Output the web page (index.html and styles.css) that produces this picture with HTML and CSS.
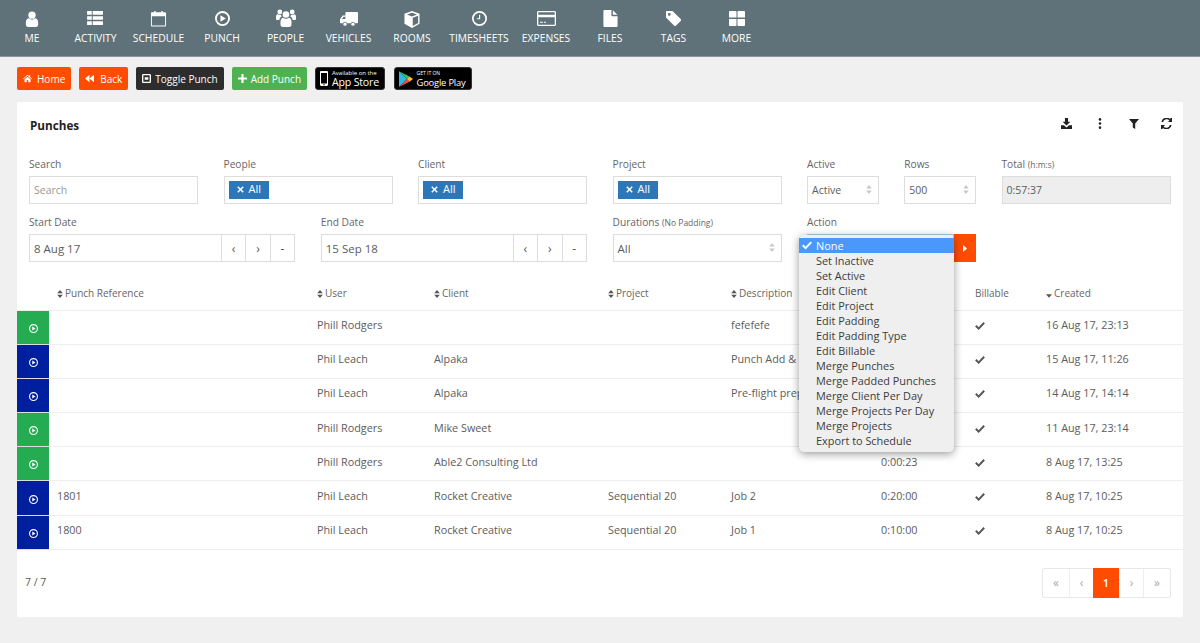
FILE: index.html
```html
<!DOCTYPE html>
<html lang="en">
<head>
<meta charset="utf-8">
<title>Punches</title>
<link rel="stylesheet" href="styles.css">
</head>
<body>
<svg class="sprite" aria-hidden="true">
  <symbol id="i-user" viewBox="0 0 16 18"><circle cx="8" cy="4.6" r="4.2"/><path d="M1 15.5v-2.7c0-2.6 1.5-4.6 3.6-4.6.9.9 2.1 1.4 3.4 1.4s2.500-.5 3.400-1.400c2.100 0 3.600 2 3.600 4.600v2.700c0 1.400-1 2.500-2.400 2.500H3.400C2 18 1 16.900 1 15.500z"/></symbol>
  <symbol id="i-list" viewBox="0 0 18 15"><path d="M0 0h5v4H0zM6 0h11v4H6zM0 5.500h5v4H0zM6 5.500h11v4H6zM0 11h5v4H0zM6 11h11v4H6z"/></symbol>
  <symbol id="i-cal" viewBox="0 0 17 18"><path d="M1.500 2.500H4V1h1.500v1.500h6V1H13v1.500h2.500c.6 0 1 .4 1 1v13c0 .6-.4 1-1 1h-14c-.6 0-1-.4-1-1v-13c0-.6.4-1 1-1zm0 4v10h14v-10z"/></symbol>
  <symbol id="i-play" viewBox="0 0 16 16"><path fill-rule="evenodd" d="M8 0a8 8 0 1 1 0 16A8 8 0 0 1 8 0zm0 2a6 6 0 1 0 0 12A6 6 0 0 0 8 2zM5.800 4.500l5.700 3.500-5.700 3.500z"/></symbol>
  <symbol id="i-users" viewBox="0 0 20 18"><circle cx="10" cy="5.500" r="3.300"/><circle cx="3.800" cy="3" r="2.400"/><circle cx="16.200" cy="3" r="2.400"/><path d="M5 10.500c.5-1 1.200-1.600 2-1.700.8.700 1.800 1 3 1s2.200-.3 3-1c.8.100 1.500.7 2 1.700.6 1.300.5 3.200.5 5 0 1.500-1 2.500-2.200 2.500H6.700C5.500 18 4.500 17 4.500 15.500c0-1.800-.1-3.700.5-5z"/><path d="M0 7.500C0 6.300.6 5.500 1.700 5.200c.6.500 1.300.8 2.100.8.500 0 1-.1 1.400-.3-.1.600.1 1.300.5 1.900-1.300.5-2.200 1.700-2.300 3.500H1.200C.5 11.100 0 10.500 0 9.700zM20 7.500c0-1.200-.6-2-1.700-2.300-.6.500-1.300.8-2.100.8-.500 0-1-.1-1.400-.3.100.6-.1 1.300-.5 1.900 1.300.5 2.200 1.700 2.300 3.500h2.200c.7 0 1.200-.6 1.200-1.400z"/></symbol>
  <symbol id="i-truck" viewBox="0 0 20 16"><path d="M7 0h12c.6 0 1 .4 1 1v10.500c0 .6-.4 1-1 1h-2.300a2.400 2.400 0 0 0-4.600 0H7.900a2.400 2.400 0 0 0-4.600 0H1c-.6 0-1-.4-1-1V8l3-4h3V1c0-.6.4-1 1-1zM2.200 7.800H6V5.200H4z"/><circle cx="5.600" cy="13.500" r="1.800"/><circle cx="14.400" cy="13.500" r="1.800"/></symbol>
  <symbol id="i-cube" viewBox="0 0 17 18"><path fill-rule="evenodd" d="M8.500 0l8 3v10.500l-8 4.500-8-4.500V3zm0 1.700L3.200 3.700l5.300 2.100 5.300-2.100zM9.300 7.100v8.900l5.700-3.200V4.900z"/></symbol>
  <symbol id="i-clock" viewBox="0 0 16 16"><path fill-rule="evenodd" d="M8 0a8 8 0 1 1 0 16A8 8 0 0 1 8 0zm0 1.800a6.200 6.200 0 1 0 0 12.400A6.200 6.200 0 0 0 8 1.800zM8.700 4v4.800H5.200V7.600h2.300V4z"/></symbol>
  <symbol id="i-card" viewBox="0 0 19 15"><path fill-rule="evenodd" d="M1.500 0h16c.8 0 1.500.7 1.500 1.500v12c0 .8-.7 1.500-1.500 1.500h-16C.7 15 0 14.300 0 13.500v-12C0 .7.700 0 1.500 0zM1.300 1.300v2.400h16.400V1.300zm0 5v7.400h16.400V6.300zM3 10.800h3v1H3zm4 0h2v1H7z"/></symbol>
  <symbol id="i-file" viewBox="0 0 15 18"><path d="M1 0h7.500v5.500c0 .6.400 1 1 1H15V17c0 .6-.4 1-1 1H1c-.6 0-1-.4-1-1V1c0-.6.400-1 1-1zM10 .2l4.800 4.900H10z"/></symbol>
  <symbol id="i-tag" viewBox="0 0 15 15"><path fill-rule="evenodd" d="M1 0h5.500L14.600 8c.6.600.6 1.500 0 2.100l-4.500 4.500c-.6.600-1.500.6-2.100 0L0 6.500V1c0-.6.400-1 1-1zm2.300 2A1.400 1.400 0 1 0 3.300 4.800 1.400 1.400 0 0 0 3.300 2z"/></symbol>
  <symbol id="i-grid" viewBox="0 0 16 15"><path d="M1 0h5.500c.6 0 1 .4 1 1v5.500H0V1c0-.6.400-1 1-1zM9.500 0H15c.6 0 1 .4 1 1v5.500H8.500V1c0-.6.400-1 1-1zM0 8h7.500v6c0 .6-.4 1-1 1H1c-.6 0-1-.4-1-1zM8.500 8H16v6c0 .6-.4 1-1 1H9.500c-.6 0-1-.4-1-1z"/></symbol>
  <symbol id="i-home" viewBox="0 0 12 10"><path d="M6 0l2 1.700V.6h1.500v2.400L12 5.200l-.6.700L6 1.400.6 5.900 0 5.200zM2 6l4-3.400L10 6v4H7V7H5v3H2z"/></symbol>
  <symbol id="i-back" viewBox="0 0 12 10"><path d="M6 0v10L0 5zM12 0v10L6 5z"/></symbol>
  <symbol id="i-toggle" viewBox="0 0 10 10"><path fill-rule="evenodd" d="M1.500 0h7C9.300 0 10 .7 10 1.500v7c0 .8-.7 1.500-1.500 1.500h-7C.7 10 0 9.300 0 8.500v-7C0 .7.700 0 1.500 0zm0 1.300v7.400h7V1.300zM3 3.500h4v3H3z"/></symbol>
  <symbol id="i-plus" viewBox="0 0 10 10"><path d="M3.800 0h2.400v3.800H10v2.400H6.200V10H3.800V6.200H0V3.800h3.800z"/></symbol>
  <symbol id="i-times" viewBox="0 0 8 8"><path d="M1.500.3L4 2.800 6.500.3l1.200 1.200L5.200 4l2.500 2.500-1.200 1.200L4 5.200 1.500 7.700.3 6.500 2.800 4 .3 1.500z"/></symbol>
  <symbol id="i-download" viewBox="0 0 12 12"><path d="M4.300 0h3.400v4h2.500L6 8.300 1.800 4h2.500zM0 8h3.200L6 10.300 8.800 8H12v4H0z"/></symbol>
  <symbol id="i-dots" viewBox="0 0 4 12"><circle cx="2" cy="1.500" r="1.400"/><circle cx="2" cy="6" r="1.400"/><circle cx="2" cy="10.500" r="1.400"/></symbol>
  <symbol id="i-filter" viewBox="0 0 10 10"><path d="M0 0h10L6.200 4.500V10L3.800 8.500v-4z"/></symbol>
  <symbol id="i-refresh" viewBox="0 0 11 11"><path d="M9.600 0L11 0v4H7l1.400-1.400A3.600 3.600 0 0 0 2.100 4H.4a5.200 5.200 0 0 1 8.600-3.100zM1.400 11H0V7h4L2.600 8.400A3.600 3.600 0 0 0 8.900 7h1.700A5.200 5.200 0 0 1 2 10.100z"/></symbol>
  <symbol id="i-sort" viewBox="0 0 7 10"><path d="M3.500 0L7 4H0zM0 6h7l-3.500 4z"/></symbol>
  <symbol id="i-desc" viewBox="0 0 7 4"><path d="M0 0h7L3.500 4z"/></symbol>
  <symbol id="i-check" viewBox="0 0 11 9"><path d="M4 9L0 5l1.600-1.600L4 5.800 9.400 0 11 1.600z"/></symbol>
  <symbol id="i-spin" viewBox="0 0 6 10"><path d="M3 0l3 4H0zM0 6h6l-3 4z"/></symbol>
  <symbol id="i-caret" viewBox="0 0 4 7"><path d="M0 0l4 3.500L0 7z"/></symbol>
  <symbol id="i-phone" viewBox="0 0 8 15"><path fill-rule="evenodd" d="M1.200 0h5.600C7.500 0 8 .5 8 1.200v12.600c0 .7-.5 1.200-1.200 1.200H1.200C.5 15 0 14.500 0 13.800V1.200C0 .5.500 0 1.200 0zM1 2v10.500h6V2zm3 11a.7.7 0 1 0 0 1.400A.7.7 0 0 0 4 13z"/></symbol>
</svg>

<nav class="nav">
  <a class="nav-item w-me"><svg class="ni ni-user"><use href="#i-user"/></svg><span>ME</span></a>
  <a class="nav-item w63"><svg class="ni ni-list"><use href="#i-list"/></svg><span>ACTIVITY</span></a>
  <a class="nav-item w63"><svg class="ni ni-cal"><use href="#i-cal"/></svg><span>SCHEDULE</span></a>
  <a class="nav-item w64"><svg class="ni ni-play"><use href="#i-play"/></svg><span>PUNCH</span></a>
  <a class="nav-item w63"><svg class="ni ni-users"><use href="#i-users"/></svg><span>PEOPLE</span></a>
  <a class="nav-item w63"><svg class="ni ni-truck"><use href="#i-truck"/></svg><span>VEHICLES</span></a>
  <a class="nav-item w64"><svg class="ni ni-cube"><use href="#i-cube"/></svg><span>ROOMS</span></a>
  <a class="nav-item w70"><svg class="ni ni-play"><use href="#i-clock"/></svg><span>TIMESHEETS</span></a>
  <a class="nav-item w64"><svg class="ni ni-card"><use href="#i-card"/></svg><span>EXPENSES</span></a>
  <a class="nav-item w64"><svg class="ni ni-file"><use href="#i-file"/></svg><span>FILES</span></a>
  <a class="nav-item w63"><svg class="ni ni-tag"><use href="#i-tag"/></svg><span>TAGS</span></a>
  <a class="nav-item w63"><svg class="ni ni-grid"><use href="#i-grid"/></svg><span>MORE</span></a>
</nav>

<div class="toolbar">
  <a class="btn orange"><svg class="bi"><use href="#i-home"/></svg>Home</a>
  <a class="btn orange"><svg class="bi bi-wide"><use href="#i-back"/></svg>Back</a>
  <a class="btn dark"><svg class="bi bi-tight"><use href="#i-toggle"/></svg>Toggle Punch</a>
  <a class="btn green"><svg class="bi bi-tight"><use href="#i-plus"/></svg>Add Punch</a>
  <a class="badge badge-apple">
    <svg class="phone"><use href="#i-phone"/></svg>
    <span class="badge-text"><small>Available on the</small><b>App Store</b></span>
  </a>
  <a class="badge badge-play">
    <svg class="gplay" viewBox="0 0 16 18"><path class="gp-b" d="M0 0v18l9-9z"/><path class="gp-g" d="M0 0l12 6-3 3z"/><path class="gp-r" d="M0 18l12-6-3-3z"/><path class="gp-y" d="M12 6l4 3-4 3-3-3z"/></svg>
    <span class="badge-text gp-text"><small>GET IT ON</small><b>Google Play</b></span>
  </a>
</div>

<main class="card">
  <header class="card-head">
    <h1>Punches</h1>
    <div class="tools">
      <svg class="ti ti-dl"><use href="#i-download"/></svg>
      <svg class="ti ti-dots"><use href="#i-dots"/></svg>
      <svg class="ti ti-fl"><use href="#i-filter"/></svg>
      <svg class="ti ti-rf"><use href="#i-refresh"/></svg>
    </div>
  </header>

  <section class="filters">
    <div class="f s2"><label>Search</label><div class="field placeholder">Search</div></div>
    <div class="f s2"><label>People</label><div class="field tags"><span class="tag"><svg class="tx"><use href="#i-times"/></svg>All</span></div></div>
    <div class="f s2"><label>Client</label><div class="field tags"><span class="tag"><svg class="tx"><use href="#i-times"/></svg>All</span></div></div>
    <div class="f s2"><label>Project</label><div class="field tags"><span class="tag"><svg class="tx"><use href="#i-times"/></svg>All</span></div></div>
    <div class="f s1"><label>Active</label><div class="field select">Active<svg class="spin"><use href="#i-spin"/></svg></div></div>
    <div class="f s1"><label>Rows</label><div class="field select">500<svg class="spin"><use href="#i-spin"/></svg></div></div>
    <div class="f s2"><label>Total <small>(h:m:s)</small></label><div class="field disabled">0:57:37</div></div>

    <div class="f s3"><label>Start Date</label><div class="group"><div class="field grow big">8 Aug 17</div><a class="gb">‹</a><a class="gb">›</a><a class="gb">-</a></div></div>
    <div class="f s3"><label>End Date</label><div class="group"><div class="field grow big">15 Sep 18</div><a class="gb">‹</a><a class="gb">›</a><a class="gb">-</a></div></div>
    <div class="f s2"><label>Durations <small>(No Padding)</small></label><div class="field select big">All<svg class="spin"><use href="#i-spin"/></svg></div></div>
    <div class="f s2 action"><label>Action</label>
      <div class="group"><div class="field grow big focus"></div><a class="go"><svg class="caret"><use href="#i-caret"/></svg></a></div>
      <ul class="popup">
        <li class="sel"><svg class="pc"><use href="#i-check"/></svg>None</li>
        <li>Set Inactive</li>
        <li>Set Active</li>
        <li>Edit Client</li>
        <li>Edit Project</li>
        <li>Edit Padding</li>
        <li>Edit Padding Type</li>
        <li>Edit Billable</li>
        <li>Merge Punches</li>
        <li>Merge Padded Punches</li>
        <li>Merge Client Per Day</li>
        <li>Merge Projects Per Day</li>
        <li>Merge Projects</li>
        <li>Export to Schedule</li>
      </ul>
    </div>
  </section>

  <table class="grid">
    <colgroup><col class="c0"><col class="c1"><col class="c2"><col class="c3"><col class="c4"><col class="c5"><col class="c6"><col class="c7"><col class="c8"></colgroup>
    <thead>
      <tr>
        <th></th>
        <th><svg class="so"><use href="#i-sort"/></svg>Punch Reference</th>
        <th><svg class="so"><use href="#i-sort"/></svg>User</th>
        <th><svg class="so"><use href="#i-sort"/></svg>Client</th>
        <th><svg class="so"><use href="#i-sort"/></svg>Project</th>
        <th><svg class="so"><use href="#i-sort"/></svg>Description</th>
        <th></th>
        <th>Billable</th>
        <th><svg class="so desc"><use href="#i-desc"/></svg>Created</th>
      </tr>
    </thead>
    <tbody>
      <tr><td class="st g"><svg class="pl"><use href="#i-play"/></svg></td><td></td><td>Phill Rodgers</td><td></td><td></td><td>fefefefe</td><td></td><td><svg class="ck"><use href="#i-check"/></svg></td><td>16 Aug 17, 23:13</td></tr>
      <tr><td class="st b"><svg class="pl"><use href="#i-play"/></svg></td><td></td><td>Phil Leach</td><td>Alpaka</td><td></td><td>Punch Add &amp;</td><td></td><td><svg class="ck"><use href="#i-check"/></svg></td><td>15 Aug 17, 11:26</td></tr>
      <tr><td class="st b"><svg class="pl"><use href="#i-play"/></svg></td><td></td><td>Phil Leach</td><td>Alpaka</td><td></td><td>Pre-flight prep</td><td></td><td><svg class="ck"><use href="#i-check"/></svg></td><td>14 Aug 17, 14:14</td></tr>
      <tr><td class="st g"><svg class="pl"><use href="#i-play"/></svg></td><td></td><td>Phill Rodgers</td><td>Mike Sweet</td><td></td><td></td><td></td><td><svg class="ck"><use href="#i-check"/></svg></td><td>11 Aug 17, 23:14</td></tr>
      <tr><td class="st g"><svg class="pl"><use href="#i-play"/></svg></td><td></td><td>Phill Rodgers</td><td>Able2 Consulting Ltd</td><td></td><td></td><td>0:00:23</td><td><svg class="ck"><use href="#i-check"/></svg></td><td>8 Aug 17, 13:25</td></tr>
      <tr><td class="st b"><svg class="pl"><use href="#i-play"/></svg></td><td>1801</td><td>Phil Leach</td><td>Rocket Creative</td><td>Sequential 20</td><td>Job 2</td><td>0:20:00</td><td><svg class="ck"><use href="#i-check"/></svg></td><td>8 Aug 17, 10:25</td></tr>
      <tr><td class="st b"><svg class="pl"><use href="#i-play"/></svg></td><td>1800</td><td>Phil Leach</td><td>Rocket Creative</td><td>Sequential 20</td><td>Job 1</td><td>0:10:00</td><td><svg class="ck"><use href="#i-check"/></svg></td><td>8 Aug 17, 10:25</td></tr>
    </tbody>
  </table>

  <footer class="card-foot">
    <span class="count">7 / 7</span>
    <div class="pager">
      <a class="pg wide">«</a><a class="pg">‹</a><a class="pg wide on">1</a><a class="pg">›</a><a class="pg wide">»</a>
    </div>
  </footer>
</main>
</body>
</html>
```

FILE: styles.css
```css
* { box-sizing: border-box; }
html, body { margin: 0; padding: 0; }
body {
  height: 643px;
  overflow: hidden;
  background: #f0f0f0;
  font-family: "Open Sans", "Liberation Sans", sans-serif;
  font-size: 11px;
  color: #5c5c5c;
}
.sprite { display: none; }
svg { fill: currentColor; }

/* top nav */
.nav {
  display: flex;
  height: 57px;
  background: #5f727a;
  border-bottom: 1px solid #8a989d;
}
.nav-item {
  display: flex;
  flex-direction: column;
  align-items: center;
  color: #fff;
  font-size: 10.3px;
  height: 55px;
  padding-top: 10px;
}
.nav-item span { position: absolute; top: 32px; line-height: 12px; }
.w-me { width: 64px; }
.w63 { width: 63px; }
.w64 { width: 64px; }
.w70 { width: 70px; }
.ni { display: block; }
.ni-user { width: 14px; height: 16px; margin-top: 1px; }
.ni-list { width: 17px; height: 14px; margin-top: 1px; }
.ni-cal { width: 17px; height: 17px; }
.ni-play { width: 15px; height: 15px; margin-top: 1px; }
.ni-users { width: 20px; height: 18px; margin-top: -1px; }
.ni-truck { width: 18px; height: 14.4px; margin-top: 2px; }
.ni-cube { width: 16px; height: 17px; margin-top: 1px; }
.ni-card { width: 19px; height: 15px; margin-top: 1px; }
.ni-file { width: 15px; height: 17px; }
.ni-tag { width: 15px; height: 15px; margin-top: 1px; }
.ni-grid { width: 16px; height: 15px; margin-top: 1px; }

/* toolbar */
.toolbar {
  display: flex;
  gap: 8px;
  padding: 10px 17px 12px;
  height: 45px;
}
.btn {
  display: flex;
  align-items: center;
  height: 23px;
  padding: 0 6px;
  border-radius: 2px;
  color: #fff;
  font-size: 10px;
  white-space: nowrap;
}
.btn.orange { background: #ff4c00; }
.btn.dark { background: #2d2d2d; }
.btn.green { background: #4fb152; }
.bi { width: 9px; height: 9px; margin-right: 5px; flex: none; }
.bi-wide { margin-right: 6px; }
.bi-tight { margin-right: 4px; }
.badge {
  display: flex;
  align-items: center;
  height: 23px;
  background: #000;
  color: #fff;
  border-radius: 3px;
  border: 1px solid #333;
  padding: 0 4px;
}
.badge-apple { width: 70px; }
.badge-play { width: 78px; margin-left: 1px; }
.phone { width: 8px; height: 15px; margin-right: 4px; flex: none; }
.gplay { width: 14px; height: 16px; margin-right: 3.5px; flex: none; }
.gp-b { fill: #2fb7e8; }
.gp-g { fill: #35c46a; }
.gp-r { fill: #ef4a54; }
.gp-y { fill: #fcc31e; }
.badge-text { display: flex; flex-direction: column; line-height: 1; white-space: nowrap; }
.badge-text small { font-size: 6px; line-height: 7px; }
.badge-text b { font-size: 10.6px; line-height: 11px; font-weight: 400; letter-spacing: -.2px; }
.gp-text small { font-size: 5px; }
.gp-text b { font-size: 9.4px; }

/* card */
.card {
  margin: 0 17px;
  height: 515px;
  background: #fff;
  border-radius: 2px;
  position: relative;
}
.card-head {
  display: flex;
  justify-content: space-between;
  align-items: center;
  height: 46px;
  padding: 0 11px 0 13px;
}
.card-head h1 { margin: 0; font-size: 11.7px; font-weight: 700; color: #222; }
.tools { display: flex; align-items: center; color: #222; margin-top: -3px; }
.ti-dl { width: 11px; height: 11px; }
.ti-dots { width: 4px; height: 11px; margin-left: 25.5px; }
.ti-fl { width: 10px; height: 10px; margin-left: 27px; }
.ti-rf { width: 11px; height: 11px; margin-left: 22.5px; }

/* filters */
.filters {
  display: grid;
  grid-template-columns: repeat(12, 1fr);
  column-gap: 25.5px;
  row-gap: 11px;
  padding: 9px 12.5px 0 12px;
}
.f { min-width: 0; }
.s1 { grid-column: span 1; }
.s2 { grid-column: span 2; }
.s3 { grid-column: span 3; }
.f label { display: block; height: 19px; line-height: 15px; font-size: 10.2px; color: #666; }
.f label small { font-size: 8.5px; }
.field {
  display: flex;
  align-items: center;
  height: 28px;
  border: 1px solid #ddd;
  background: #fff;
  padding: 0 4px;
  font-size: 10.5px;
  color: #5c5c5c;
  position: relative;
}
.placeholder { color: #999; }
.disabled { background: #eee; }
.tags { padding: 0 4px; }
.tag {
  display: flex;
  align-items: center;
  height: 18px;
  width: 40px;
  margin-top: -1px;
  background: #2b77b9;
  color: #fff;
  padding: 0 0 2px 8px;
  font-size: 11px;
}
.tx { width: 7px; height: 7px; margin: 2px 5px 0 0; }
.select .spin { position: absolute; right: 6px; top: 8px; }
.spin { width: 6px; height: 9px; color: #c8c8c8; }
.big { font-size: 11.5px; }
.group { display: flex; height: 28px; }
.grow { flex: 1; min-width: 0; }
.gb {
  width: 24.5px;
  height: 28px;
  border: 1px solid #ddd;
  border-left: 0;
  display: flex;
  align-items: center;
  justify-content: center;
  font-size: 12px;
  color: #555;
}
.action { position: relative; }
.focus { border-color: #a9cdeb; }
.go {
  width: 22px;
  background: #ff4c00;
  color: #fff;
  display: flex;
  align-items: center;
  justify-content: center;
}
.caret { width: 4px; height: 7px; }
.popup {
  position: absolute;
  top: 20px;
  left: -8.5px;
  width: 155px;
  height: 217px;
  margin: 0;
  padding: 3px 0;
  list-style: none;
  background: #efefef;
  border-radius: 5px;
  box-shadow: 0 2px 9px rgba(0,0,0,.4);
  font-size: 10.9px;
  color: #3c3c3c;
  z-index: 5;
}
.popup li { position: relative; height: 15px; line-height: 15px; padding-left: 17.5px; white-space: nowrap; }
.popup .sel { background: #4a98fb; color: #fff; }
.pc { position: absolute; left: 3.5px; top: 3px; width: 10px; height: 9px; }

/* table */
.grid {
  margin-top: 16px;
  width: 1166px;
  table-layout: fixed;
  border-collapse: collapse;
  font-size: 10.8px;
}
.c0 { width: 32px; }
.c1 { width: 260px; }
.c2 { width: 117px; }
.c3 { width: 174px; }
.c4 { width: 123px; }
.c5 { width: 150px; }
.c6 { width: 94px; }
.c7 { width: 71px; }
.c8 { width: 145px; }
.grid th {
  height: 32px;
  padding: 0 8px 2px;
  text-align: left;
  font-weight: 400;
  color: #666;
  border-bottom: 1px solid #eee;
  font-size: 10px;
}
.grid td {
  height: 34.2px;
  padding: 0 8px 5px;
  border-bottom: 1px solid #eee;
  white-space: nowrap;
  overflow: hidden;
}
.so { width: 6px; height: 8px; margin-right: 2px; vertical-align: -1px; color: #555; }
.so.desc { height: 4px; vertical-align: -1px; }
.st { padding: 0 !important; text-align: center; color: #fff; border-bottom-color: #ddd !important; }
.st.g { background: #25ab52; }
.st.b { background: #001f9e; }
.pl { width: 9px; height: 9px; display: inline-block; vertical-align: -1px; }
.ck { width: 10px; height: 8px; color: #555; vertical-align: -1px; }

/* footer */
.card-foot {
  display: flex;
  justify-content: space-between;
  align-items: flex-start;
  padding: 18px 12px 0 8px;
}
.count { font-size: 10.5px; line-height: 28px; }
.pager {
  display: flex;
  width: 129px;
  height: 30px;
  border: 1px solid #e8e8e8;
  border-radius: 2px;
}
.pg {
  display: flex;
  align-items: center;
  justify-content: center;
  flex: 24 0 0;
  color: #aaa;
  font-size: 12px;
  border-left: 1px solid #eee;
}
.pg:first-child { border-left: 0; }
.pg.wide { flex-grow: 27; }
.pg.on { background: #ff4c00; color: #fff; font-size: 10.5px; font-weight: 600; border: 0; margin: -1px 0; }
```
